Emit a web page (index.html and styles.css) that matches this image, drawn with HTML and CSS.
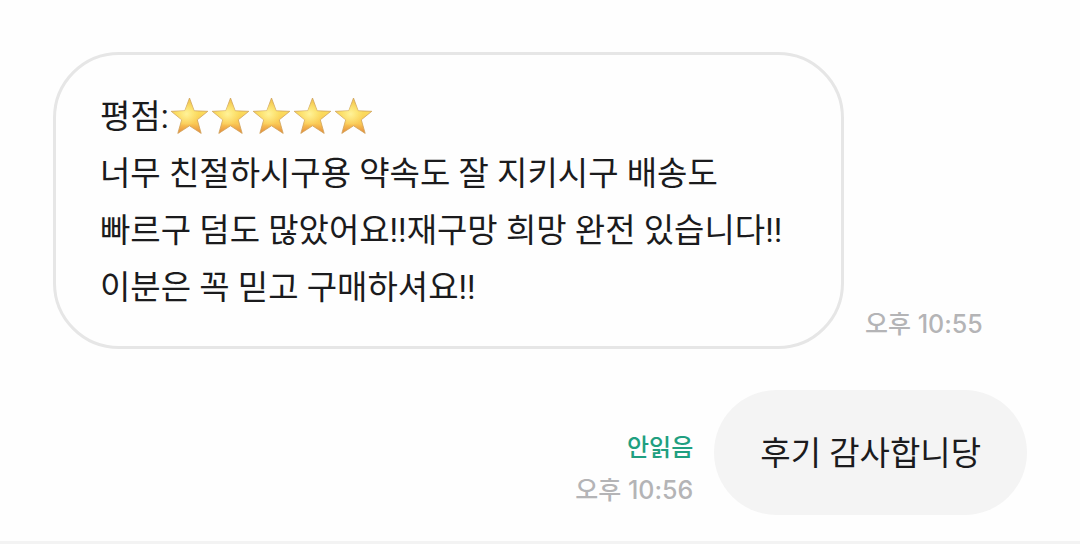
FILE: index.html
```html
<!DOCTYPE html>
<html lang="ko">
<head>
  <meta charset="UTF-8">
  <meta name="viewport" content="width=device-width, initial-scale=1.0">
  <title>채팅</title>
  <link rel="stylesheet" href="styles.css">
</head>
<body>

  <!-- Star shape shared by the rating -->
  <svg class="defs" width="0" height="0" aria-hidden="true">
    <defs>
      <linearGradient id="starFill" x1="0" y1="0" x2="0" y2="1">
        <stop offset="0" stop-color="#f3c650"/>
        <stop offset="0.4" stop-color="#fbdb5c"/>
        <stop offset="0.72" stop-color="#fac955"/>
        <stop offset="1" stop-color="#e5893a"/>
      </linearGradient>
      <radialGradient id="starGlow" cx="0.42" cy="0.45" r="0.34">
        <stop offset="0" stop-color="#fff29a"/>
        <stop offset="1" stop-color="#fff08a" stop-opacity="0"/>
      </radialGradient>
      <symbol id="star" viewBox="0 0 41 40">
        <path d="M20.5 1 L25.2 13.8 L38.8 14.3 L28.3 22.8 L32.2 36.4 L20.5 28.8 L8.8 36.4 L12.7 22.8 L2.2 14.3 L15.8 13.8 Z" fill="url(#starFill)" stroke="#cfa25a" stroke-width="0.8" stroke-linejoin="round"/>
        <path d="M20.5 1 L25.2 13.8 L38.8 14.3 L28.3 22.8 L32.2 36.4 L20.5 28.8 L8.8 36.4 L12.7 22.8 L2.2 14.3 L15.8 13.8 Z" fill="url(#starGlow)"/>
      </symbol>
    </defs>
  </svg>

  <main class="chat">
    <div class="message received">
      <div class="bubble">
        <p class="rating">평점:<span class="stars" role="img" aria-label="별 5개"><svg><use href="#star"/></svg><svg><use href="#star"/></svg><svg><use href="#star"/></svg><svg><use href="#star"/></svg><svg><use href="#star"/></svg></span></p>
        <p>너무 친절하시구용 약속도 잘 지키시구 배송도<br>빠르구 덤도 많았어요!!재구망 희망 완전 있습니다!!<br>이분은 꼭 믿고 구매하셔요!!</p>
      </div>
      <div class="meta">
        <time datetime="22:55">오후 10:55</time>
      </div>
    </div>

    <div class="message sent">
      <div class="meta">
        <span class="unread">안읽음</span>
        <time datetime="22:56">오후 10:56</time>
      </div>
      <div class="bubble">
        <p>후기 감사합니당</p>
      </div>
    </div>
  </main>

  <footer class="input-bar"></footer>

</body>
</html>
```
FILE: styles.css
```css
* {
  box-sizing: border-box;
}

body {
  margin: 0;
  min-height: 100vh;
  display: flex;
  flex-direction: column;
  background-color: #fefefe;
  color: #1b1b1d;
  font-family: Roboto, "Noto Sans CJK KR", sans-serif;
}

p {
  margin: 0;
}

.defs {
  position: absolute;
}

.chat {
  flex: 1;
  display: flex;
  flex-direction: column;
  gap: 41px;
  padding: 52px 53px 26px;
}

.message {
  display: flex;
  align-items: flex-end;
  gap: 21px;
}

.sent {
  justify-content: flex-end;
}

.bubble {
  font-size: 33px;
  line-height: 57px;
  border-radius: 66px;
  padding: 33px 44px 30px;
}

.received .bubble {
  max-width: 791px;
  flex: 1;
  border: 3px solid #e6e6e6;
}

.sent .bubble {
  padding: 35px 46px 33px;
  background-color: #f4f4f4;
}

.rating {
  display: flex;
  align-items: center;
}

.stars {
  display: flex;
}

.stars svg {
  width: 41px;
  height: 40px;
}

.meta {
  display: flex;
  flex-direction: column;
  align-items: flex-end;
  padding-bottom: 4px;
  font-family: Inter, "Noto Sans CJK KR", sans-serif;
  font-size: 25px;
  font-weight: 500;
  line-height: 42px;
  color: #b4b4b6;
}

.unread {
  font-size: 24px;
  color: #1f9f80;
}

.input-bar {
  height: 3px;
  background-color: #f3f3f3;
}
```
